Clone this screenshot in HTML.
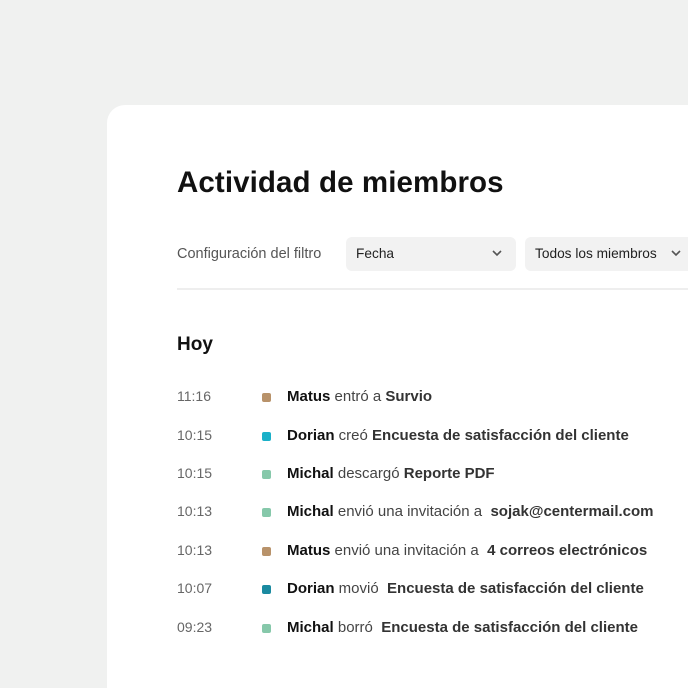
<!DOCTYPE html>
<html style="width:688px;height:688px;overflow:hidden"><head><style>
body{margin:0;width:688px;height:688px;background:#f0f1f0;overflow:hidden;font-family:"Liberation Sans",sans-serif;position:relative}
.card{position:absolute;left:107px;top:105px;width:581px;height:583px;background:#fff;border-radius:18px 0 0 0}
h1{position:absolute;left:177px;top:166px;margin:0;font-size:29.5px;font-weight:bold;color:#111;letter-spacing:0.1px}
.lbl{position:absolute;left:177px;top:246px;font-size:14.5px;color:#555}
.sel{position:absolute;top:237px;height:34px;background:#f2f2f2;border-radius:6px;font-size:13.7px;color:#222;box-sizing:border-box;padding:9px 10px;overflow:hidden}
.sel svg{position:absolute;top:13px}
.hr{position:absolute;left:177px;top:288px;width:511px;height:2px;background:#eeeeee}
.hoy{position:absolute;left:177px;top:334px;font-size:19px;font-weight:bold;color:#111}
.row{position:absolute;left:177px;font-size:15px;color:#444;white-space:nowrap}
.row .t{position:absolute;left:0;top:0;color:#666;font-size:14px}
.row .d{position:absolute;left:85px;top:5px;width:9px;height:9px;border-radius:2px}
.row .x{position:absolute;left:110px;top:0}
b{color:#111}
.o{font-weight:bold;color:#333}
</style></head><body>
<div class="card"></div>
<h1>Actividad de miembros</h1>
<div class="lbl">Configuración del filtro</div>
<div class="sel" style="left:346px;width:170px">Fecha<svg style="left:146px" width="10" height="7" viewBox="0 0 10 7"><path d="M1 1l4 4 4-4" stroke="#555" stroke-width="1.6" fill="none"/></svg></div>
<div class="sel" style="left:525px;width:163px;border-radius:6px 0 0 6px">Todos los miembros<svg style="left:146px" width="10" height="7" viewBox="0 0 10 7"><path d="M1 1l4 4 4-4" stroke="#555" stroke-width="1.6" fill="none"/></svg></div>
<div class="hr"></div>
<div class="hoy">Hoy</div>
<div class="row" style="top:388px"><span class="t">11:16</span><span class="d" style="background:#b8926a"></span><span class="x"><b>Matus</b> entró a <span class="o">Survio</span></span></div>
<div class="row" style="top:427px"><span class="t">10:15</span><span class="d" style="background:#1ab0c8"></span><span class="x"><b>Dorian</b> creó <span class="o">Encuesta de satisfacción del cliente</span></span></div>
<div class="row" style="top:465px"><span class="t">10:15</span><span class="d" style="background:#86c8aa"></span><span class="x"><b>Michal</b> descargó <span class="o">Reporte PDF</span></span></div>
<div class="row" style="top:503px"><span class="t">10:13</span><span class="d" style="background:#86c8aa"></span><span class="x"><b>Michal</b> envió una invitación a &nbsp;<span class="o">sojak@centermail.com</span></span></div>
<div class="row" style="top:542px"><span class="t">10:13</span><span class="d" style="background:#b8926a"></span><span class="x"><b>Matus</b> envió una invitación a &nbsp;<span class="o">4 correos electrónicos</span></span></div>
<div class="row" style="top:580px"><span class="t">10:07</span><span class="d" style="background:#1a8aa0"></span><span class="x"><b>Dorian</b> movió &nbsp;<span class="o">Encuesta de satisfacción del cliente</span></span></div>
<div class="row" style="top:619px"><span class="t">09:23</span><span class="d" style="background:#86c8aa"></span><span class="x"><b>Michal</b> borró &nbsp;<span class="o">Encuesta de satisfacción del cliente</span></span></div>
</body></html>
